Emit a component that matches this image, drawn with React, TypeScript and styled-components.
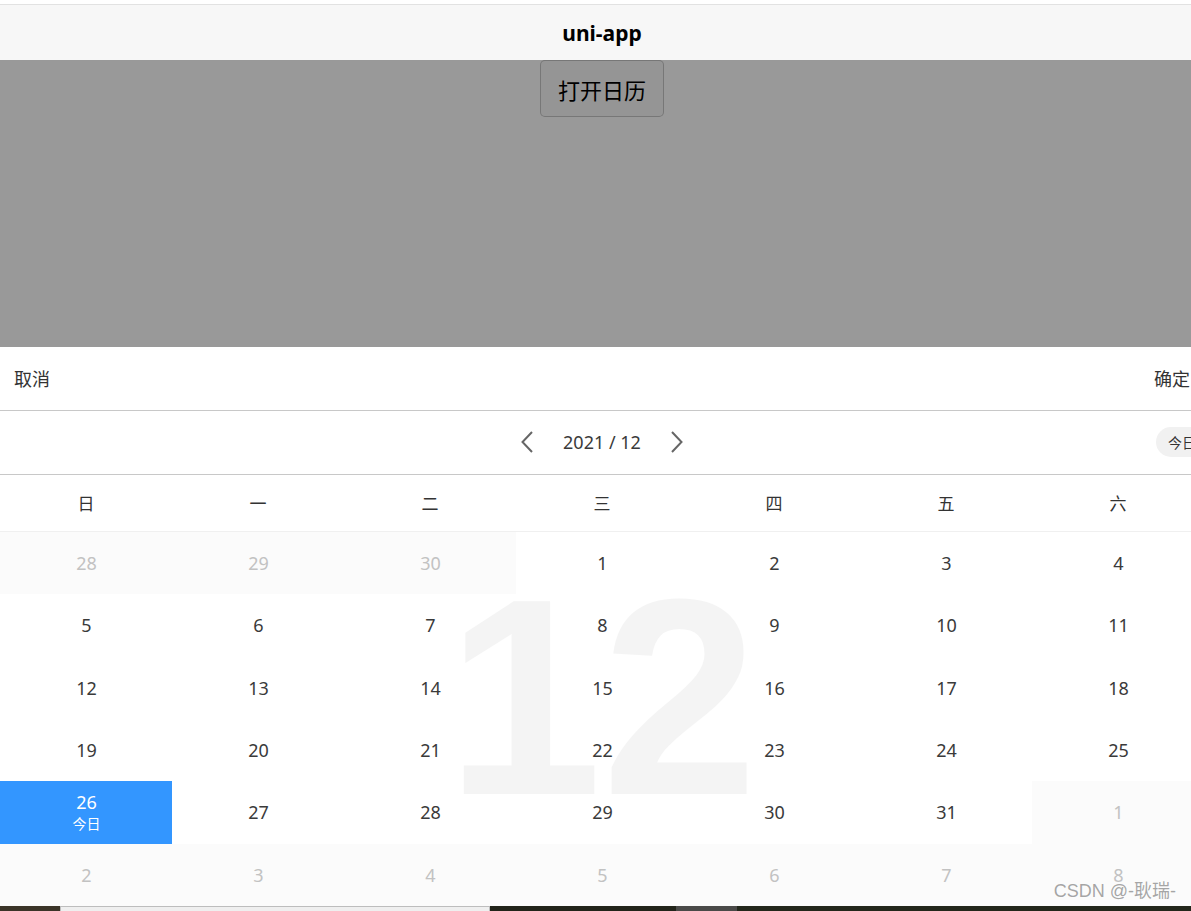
import React from "react";
import styled, { createGlobalStyle } from "styled-components";

const GlobalStyle = createGlobalStyle`
  html, body {
    margin: 0;
    padding: 0;
    overflow: hidden;
    background: #ffffff;
  }
  body {
    font-family: "Noto Sans", "Noto Sans CJK SC", sans-serif;
  }
`;

const Page = styled.div`
  position: relative;
  width: 1204px;
  height: 911px;
  display: flex;
  flex-direction: column;
`;

const StatusGap = styled.div`
  height: 4px;
  background: #ffffff;
  border-bottom: 1px solid #e2e2e2;
`;

const NavBar = styled.div`
  height: 55px;
  background: #f7f7f7;
  display: flex;
  align-items: center;
  justify-content: center;
  font-size: 21px;
  font-weight: 700;
  color: #000;
`;

const Content = styled.div`
  position: relative;
  height: 287px;
  display: flex;
  justify-content: center;
  align-items: flex-start;
  background: #ffffff;
`;

const OpenButton = styled.button`
  width: 124px;
  height: 57px;
  border: 1px solid rgba(0, 0, 0, 0.2);
  border-radius: 5px;
  background: #f8f8f8;
  color: #000;
  font-family: "Noto Sans CJK SC", sans-serif;
  font-size: 22px;
  padding: 0;
`;

const Mask = styled.div`
  position: absolute;
  inset: 0;
  background: rgba(0, 0, 0, 0.4);
`;

const Popup = styled.div`
  height: 559px;
  display: flex;
  flex-direction: column;
  background: #ffffff;
`;

const ActionBar = styled.div`
  box-sizing: border-box;
  height: 64px;
  display: flex;
  align-items: center;
  justify-content: space-between;
  padding: 0 14px;
  border-bottom: 1px solid #c8c8c8;
  font-size: 18px;
  color: #333;
  font-family: "Noto Sans CJK SC", sans-serif;
`;

const MonthBar = styled.div`
  box-sizing: border-box;
  height: 64px;
  display: grid;
  grid-template-columns: 1fr auto 1fr;
  align-items: center;
  border-bottom: 1px solid #c8c8c8;
`;

const MonthNav = styled.div`
  grid-column: 2;
  display: flex;
  align-items: center;
  gap: 30px;
`;

const MonthTitle = styled.span`
  font-size: 18px;
  color: #3a3a3a;
`;

const Arrow = styled.svg`
  width: 12px;
  height: 22px;
  display: block;
`;

const TodayPill = styled.div`
  grid-column: 3;
  justify-self: end;
  height: 30px;
  display: flex;
  align-items: center;
  padding: 0 8px 0 12px;
  background: #f1f1f1;
  border-radius: 15px 0 0 15px;
  font-family: "Noto Sans CJK SC", sans-serif;
  font-size: 14px;
  color: #333;
`;

const CalendarBody = styled.div`
  position: relative;
  flex: 1;
  display: flex;
  flex-direction: column;
`;

const Watermark = styled.div`
  position: absolute;
  inset: 0;
  padding-top: 14px;
  display: flex;
  align-items: center;
  justify-content: center;
  pointer-events: none;
`;

const WatermarkText = styled.span`
  font-family: "Liberation Sans", Arial, sans-serif;
  font-size: 280px;
  font-weight: 700;
  line-height: 1;
  color: #999;
  opacity: 0.1;
`;

const WeekRow = styled.div`
  box-sizing: border-box;
  height: 57px;
  display: grid;
  grid-template-columns: repeat(7, 1fr);
  border-bottom: 1px solid #f0f0f0;
`;

const WeekDay = styled.div`
  display: flex;
  align-items: center;
  justify-content: center;
  font-family: "Noto Sans CJK SC", sans-serif;
  font-size: 17px;
  color: #333;
`;

const DaysGrid = styled.div`
  position: relative;
  display: grid;
  grid-template-columns: repeat(7, 1fr);
  grid-auto-rows: 62.4px;
`;

const DayCell = styled.div<{ $muted?: boolean; $today?: boolean }>`
  display: flex;
  flex-direction: column;
  align-items: center;
  justify-content: center;
  padding-left: 1px;
  font-size: 18px;
  line-height: 22px;
  color: ${(p) => (p.$today ? "#ffffff" : p.$muted ? "#c2c2c2" : "#3a3a3a")};
  background: ${(p) =>
    p.$today ? "#3396ff" : p.$muted ? "rgba(249, 249, 249, 0.6)" : "transparent"};
`;

const TodayLabel = styled.span`
  font-family: "Noto Sans CJK SC", sans-serif;
  font-size: 14px;
  line-height: 20px;
`;

const Taskbar = styled.div`
  height: 5px;
  display: flex;
`;

const TaskSegment = styled.div<{ $w?: number; $bg: string; $framed?: boolean }>`
  box-sizing: border-box;
  ${(p) => (p.$w ? `width: ${p.$w}px;` : "flex: 1;")}
  background: ${(p) => p.$bg};
  ${(p) => (p.$framed ? "border: 1px solid #bdbdbd; border-bottom: none;" : "")}
`;

const Credit = styled.div`
  position: absolute;
  right: 28px;
  bottom: 9px;
  font-family: "Liberation Sans", "Noto Sans CJK SC", sans-serif;
  font-size: 18px;
  color: rgba(150, 150, 150, 0.85);
`;

type Day = { n: number; muted?: boolean; today?: boolean };

const weekNames = ["日", "一", "二", "三", "四", "五", "六"];

function buildDays(): Day[] {
  const days: Day[] = [];
  [28, 29, 30].forEach((n) => days.push({ n, muted: true }));
  for (let n = 1; n <= 31; n++) days.push({ n, today: n === 26 });
  for (let n = 1; days.length < 42; n++) days.push({ n, muted: true });
  return days;
}

export default function App() {
  const days = buildDays();
  return (
    <>
      <GlobalStyle />
      <Page>
        <StatusGap />
        <NavBar>uni-app</NavBar>
        <Content>
          <OpenButton>打开日历</OpenButton>
          <Mask />
        </Content>
        <Popup>
          <ActionBar>
            <span>取消</span>
            <span>确定</span>
          </ActionBar>
          <MonthBar>
            <MonthNav>
              <Arrow viewBox="0 0 12 22">
                <path d="M11 1 L1.5 11 L11 21" fill="none" stroke="#666" strokeWidth="2" />
              </Arrow>
              <MonthTitle>2021 / 12</MonthTitle>
              <Arrow viewBox="0 0 12 22">
                <path d="M1 1 L10.5 11 L1 21" fill="none" stroke="#666" strokeWidth="2" />
              </Arrow>
            </MonthNav>
            <TodayPill>今日</TodayPill>
          </MonthBar>
          <CalendarBody>
            <Watermark>
              <WatermarkText>12</WatermarkText>
            </Watermark>
            <WeekRow>
              {weekNames.map((w) => (
                <WeekDay key={w}>{w}</WeekDay>
              ))}
            </WeekRow>
            <DaysGrid>
              {days.map((d, i) => (
                <DayCell key={i} $muted={d.muted} $today={d.today}>
                  <span>{d.n}</span>
                  {d.today && <TodayLabel>今日</TodayLabel>}
                </DayCell>
              ))}
            </DaysGrid>
          </CalendarBody>
        </Popup>
        <Taskbar>
          <TaskSegment $w={60} $bg="#3b3428" />
          <TaskSegment $w={430} $bg="#efefef" $framed />
          <TaskSegment $w={186} $bg="#22241a" />
          <TaskSegment $w={61} $bg="#4a4a48" />
          <TaskSegment $bg="#23271b" />
        </Taskbar>
        <Credit>CSDN @-耿瑞-</Credit>
      </Page>
    </>
  );
}
